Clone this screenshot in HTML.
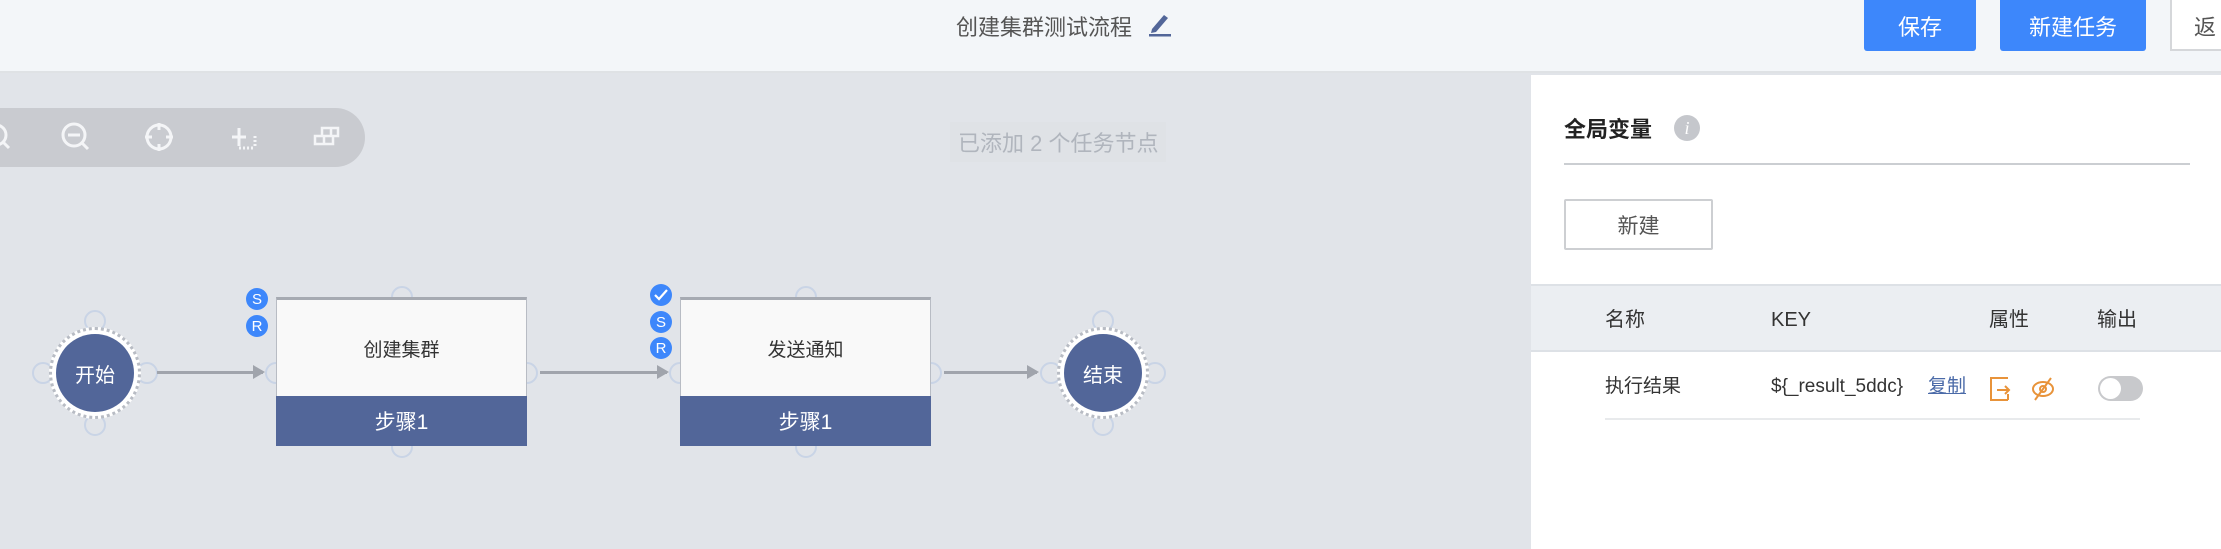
<!DOCTYPE html>
<html><head><meta charset="utf-8"><style>
*{margin:0;padding:0;box-sizing:border-box}
body{width:2221px;height:549px;overflow:hidden;position:relative;font-family:"Liberation Sans","Noto Sans CJK SC",sans-serif;background:#e1e4e9}
.a{position:absolute}
.hdr{left:0;top:0;width:2221px;height:73px;background:#f3f6f9;border-bottom:2px solid #dfe2e5}
.btn{top:0;height:51px;background:#3d87fb;color:#fff;font-size:22px;display:flex;align-items:center;justify-content:center;border-radius:0 0 3px 3px}
.port{width:22px;height:22px;border-radius:50%;border:2px solid #c9d4e6;background:transparent}
.badge{width:22px;height:22px;border-radius:50%;background:#3d87fb;color:#fff;font-size:15px;display:flex;align-items:center;justify-content:center}
.circ{width:92px;height:92px;border-radius:50%;border:3px dotted #b8bcc4;background:#fff;display:flex;align-items:center;justify-content:center}
.circ div{width:78px;height:78px;border-radius:50%;background:#526699;color:#fff;font-size:20px;display:flex;align-items:center;justify-content:center}
.box{width:251px;height:149px;background:#f9f9f9;border:1px solid #b8bcc4;border-top:3px solid #a6aab2}
.box .t{height:97px;display:flex;align-items:center;justify-content:center;font-size:19px;color:#333}
.box .b{position:absolute;left:-1px;right:-1px;bottom:-1px;height:50px;background:#526699;color:#fff;font-size:21px;display:flex;align-items:center;justify-content:center}
.arr{height:3px;background:#a0a4ac}
.arr:after{content:"";position:absolute;right:-2px;top:-6px;border-left:12px solid #a0a4ac;border-top:7.5px solid transparent;border-bottom:7.5px solid transparent}
.th{font-size:20px;color:#333;top:305px;height:30px;line-height:30px}
.td{font-size:19px;color:#333;top:372px;height:30px;line-height:30px}
</style></head><body>
<div class="a hdr"></div>
<div class="a" style="left:956px;top:10px;font-size:22px;color:#555">创建集群测试流程</div>
<svg class="a" style="left:1146px;top:9px" width="28" height="28" viewBox="0 0 28 28"><path d="M6 20 L18 6 L22 9 L10 23 L5 24 Z" fill="#526699"/><rect x="3" y="25" width="22" height="2.5" fill="#526699"/></svg>
<div class="a btn" style="left:1864px;width:112px">保存</div>
<div class="a btn" style="left:2000px;width:146px">新建任务</div>
<div class="a" style="left:2170px;top:0;width:60px;height:51px;background:#fff;border:2px solid #d5d7da;border-top:none;font-size:22px;color:#555;padding:10px 0 0 22px">返</div>

<div class="a" style="left:-40px;top:108px;width:405px;height:59px;background:#c9cbd0;border-radius:30px"></div>
<svg class="a" style="left:0;top:108px" width="365" height="59" viewBox="0 0 365 59" fill="none" stroke="#f4f5f7" stroke-width="3">
<circle cx="-4" cy="27" r="10"/><path d="M3 34 L9 40"/>
<circle cx="74" cy="27" r="11"/><path d="M68 27h12M82 35l6 6"/>
<circle cx="159" cy="29" r="12"/><path d="M159 15v7M159 36v7M145 29h7M166 29h7"/>
<path d="M232 29h14M239 20v18" /><path d="M239 40h16M255 28v12" stroke-dasharray="2 2"/>
<path d="M315 28h9v8h-9zM324 28h9v8h-9zM322 20h9v8h-9zM331 20h7v8h-7z" stroke-width="2.5"/>
</svg>
<div class="a" style="left:950px;top:122px;padding:4px 8px;background:#dfe2e6;font-size:22px;color:#b0b5bd">已添加 2 个任务节点</div>

<div class="a port" style="left:84px;top:310px"></div><div class="a port" style="left:84px;top:414px"></div>
<div class="a port" style="left:32px;top:362px"></div><div class="a port" style="left:136px;top:362px"></div>
<div class="a port" style="left:391px;top:286px"></div><div class="a port" style="left:391px;top:436px"></div>
<div class="a port" style="left:265px;top:362px"></div><div class="a port" style="left:516px;top:362px"></div>
<div class="a port" style="left:795px;top:286px"></div><div class="a port" style="left:795px;top:436px"></div>
<div class="a port" style="left:669px;top:362px"></div><div class="a port" style="left:920px;top:362px"></div>
<div class="a port" style="left:1092px;top:310px"></div><div class="a port" style="left:1092px;top:414px"></div>
<div class="a port" style="left:1040px;top:362px"></div><div class="a port" style="left:1144px;top:362px"></div>

<div class="a circ" style="left:49px;top:327px"><div>开始</div></div>
<div class="a circ" style="left:1057px;top:327px"><div>结束</div></div>
<div class="a arr" style="left:157px;top:371px;width:106px"></div>
<div class="a arr" style="left:540px;top:371px;width:127px"></div>
<div class="a arr" style="left:944px;top:371px;width:93px"></div>

<div class="a box" style="left:276px;top:297px"><div class="t">创建集群</div><div class="b">步骤1</div></div>
<div class="a box" style="left:680px;top:297px"><div class="t">发送通知</div><div class="b">步骤1</div></div>
<div class="a badge" style="left:246px;top:288px">S</div>
<div class="a badge" style="left:246px;top:315px">R</div>
<div class="a badge" style="left:650px;top:284px"><svg width="14" height="12"><path d="M1 6l4 4 8-9" stroke="#fff" stroke-width="2.2" fill="none"/></svg></div>
<div class="a badge" style="left:650px;top:311px">S</div>
<div class="a badge" style="left:650px;top:337px">R</div>

<div class="a" style="left:1531px;top:75px;width:690px;height:474px;background:#fff"></div>
<div class="a" style="left:1564px;top:112px;font-size:22px;font-weight:bold;color:#222">全局变量</div>
<div class="a" style="left:1674px;top:115px;width:26px;height:26px;border-radius:50%;background:#c5c7cc;color:#fff;font-style:italic;font-family:'Liberation Serif',serif;font-size:18px;text-align:center;line-height:26px">i</div>
<div class="a" style="left:1564px;top:163px;width:626px;height:2px;background:#cbced2"></div>
<div class="a" style="left:1564px;top:199px;width:149px;height:51px;border:2px solid #cdcfd2;border-radius:2px;font-size:21px;color:#555;display:flex;align-items:center;justify-content:center">新建</div>
<div class="a" style="left:1531px;top:284px;width:690px;height:68px;background:#ebeef2;border-top:2px solid #dde1e6;border-bottom:2px solid #dde1e6"></div>
<div class="a th" style="left:1605px">名称</div>
<div class="a th" style="left:1771px">KEY</div>
<div class="a th" style="left:1989px">属性</div>
<div class="a th" style="left:2097px">输出</div>
<div class="a td" style="left:1605px">执行结果</div>
<div class="a td" style="left:1771px">${_result_5ddc}</div>
<div class="a td" style="left:1928px;color:#4a6aa8;text-decoration:underline">复制</div>
<svg class="a" style="left:1988px;top:376px" width="26" height="26" viewBox="0 0 26 26" fill="none" stroke="#e8933a" stroke-width="2"><path d="M20 2H3v22h17M20 18v6"/><path d="M9 14h12M17 10l4 4-4 4"/></svg>
<svg class="a" style="left:2030px;top:376px" width="26" height="26" viewBox="0 0 26 26" fill="none" stroke="#e8933a" stroke-width="2"><ellipse cx="13" cy="13" rx="10" ry="7"/><circle cx="13" cy="13" r="3"/><path d="M21 2L5 24"/></svg>
<div class="a" style="left:2098px;top:376px;width:45px;height:25px;border-radius:13px;background:#c8c9cc"><div style="position:absolute;left:2px;top:2px;width:21px;height:21px;border-radius:50%;background:#fff"></div></div>
<div class="a" style="left:1605px;top:418px;width:535px;height:2px;background:#e8eaec"></div>
</body></html>
